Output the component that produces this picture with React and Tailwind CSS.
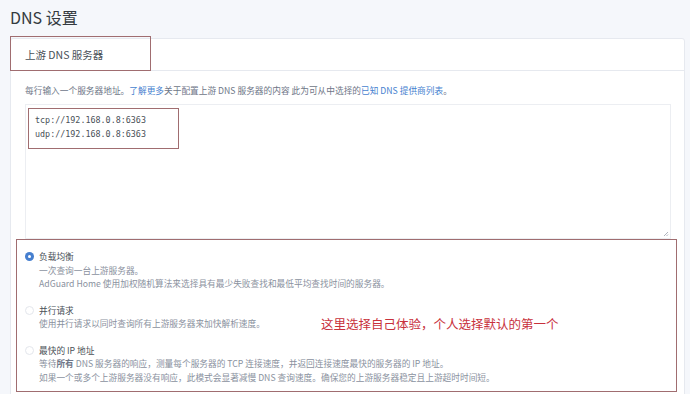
const options = [
  {
    id: 'load',
    label: '负载均衡',
    lines: [
      '一次查询一台上游服务器。',
      'AdGuard Home 使用加权随机算法来选择具有最少失败查找和最低平均查找时间的服务器。',
    ],
  },
  {
    id: 'parallel',
    label: '并行请求',
    lines: ['使用并行请求以同时查询所有上游服务器来加快解析速度。'],
  },
  {
    id: 'fastest',
    label: '最快的 IP 地址',
    lines: [
      <>等待<b className="font-bold text-[#6e7687]">所有</b> DNS 服务器的响应，测量每个服务器的 TCP 连接速度，并返回连接速度最快的服务器的 IP 地址。</>,
      '如果一个或多个上游服务器没有响应，此模式会显著减慢 DNS 查询速度。确保您的上游服务器稳定且上游超时时间短。',
    ],
  },
];

const Radio = ({ checked }) =>
  checked ? (
    <span className="mt-[2px] flex h-[9px] w-[9px] shrink-0 items-center justify-center rounded-full bg-[#467fcf]">
      <span className="h-[3px] w-[3px] rounded-full bg-white" />
    </span>
  ) : (
    <span className="mt-[2px] h-[9px] w-[9px] shrink-0 rounded-full border border-[#e3e6ec] bg-white" />
  );

export default function App() {
  const mode = 'load';

  return (
    <div
      className="h-[394px] w-[690px] overflow-hidden bg-[#f5f7fb] text-[#495057]"
      style={{ fontFamily: '"Noto Sans CJK SC", "Noto Sans", sans-serif' }}
    >
      <h1 className="px-[10px] pt-[6px] text-[16px] leading-[22px] font-normal text-[#343a40]">DNS 设置</h1>

      <div className="mt-[10px] ml-[10px] w-[675px] rounded-[3px] border border-[#e6e9ef] bg-white">
        <div className="relative flex h-[32px] items-center border-b border-[#e6e9ef] px-[14px] text-[10.5px]">
          上游 DNS 服务器
          <div className="absolute top-[-3px] left-[-1px] h-[35px] w-[141px] border border-[#a06d70]" />
        </div>

        <div className="px-[14px] pt-[13px]">
          <p className="text-[8.7px] leading-[13px] text-[#6e7687]">
            每行输入一个服务器地址。<span className="text-[#467fcf]">了解更多</span>关于配置上游 DNS 服务器的内容 此为可从中选择的<span className="text-[#467fcf]">已知 DNS 提供商列表</span>。
          </p>

          <div className="relative mt-[7px] h-[135px] w-[646px] border border-[#eceef2] px-[9px] pt-[8px]">
            <pre
              className="text-[8.4px] leading-[14px] text-[#495057]"
              style={{ fontFamily: '"DejaVu Sans Mono", monospace' }}
            >
{`tcp://192.168.0.8:6363
udp://192.168.0.8:6363`}
            </pre>
            <div className="absolute top-[3px] left-[2px] h-[41px] w-[151px] border border-[#a06d70]" />
            <svg className="absolute right-[1px] bottom-[1px]" width="6" height="6" viewBox="0 0 6 6">
              <path d="M1 5 L5 1 M3.5 5 L5 3.5" stroke="#9aa0ac" strokeWidth="0.8" />
            </svg>
          </div>

          <div className="relative mr-[-7px] ml-[-9px] mb-[10px] border border-[#a06d70] pt-[10px] pr-[10px] pb-[7px] pl-[8px]">
            {options.map((opt, i) => (
              <div key={opt.id} className={`flex gap-[5px] ${i > 0 ? 'mt-[13px]' : ''}`}>
                <Radio checked={opt.id === mode} />
                <div className="text-[8.7px] leading-[13.5px]">
                  <div className="text-[#495057]">{opt.label}</div>
                  {opt.lines.map((line, j) => (
                    <div key={j} className="text-[#8a919e]">
                      {line}
                    </div>
                  ))}
                </div>
              </div>
            ))}
            <div className="absolute top-[76px] left-[304px] text-[12.5px] leading-[16px] text-[#c8313c]">
              这里选择自己体验，个人选择默认的第一个
            </div>
          </div>
        </div>
      </div>
    </div>
  );
}
